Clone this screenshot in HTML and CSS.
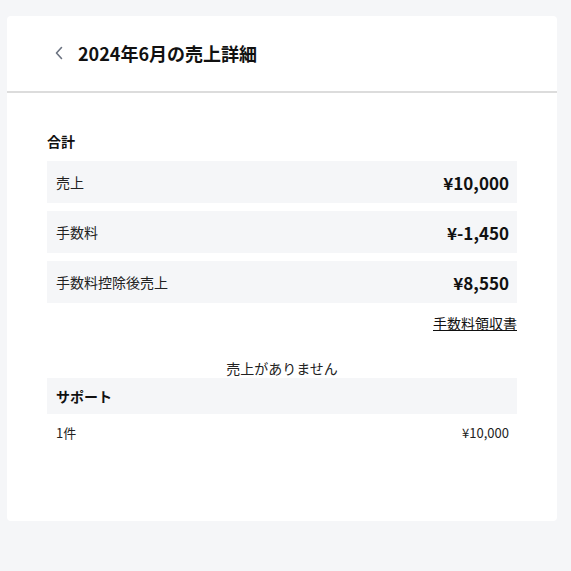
FILE: index.html
```html
<!DOCTYPE html>
<html lang="ja">
<head>
<meta charset="utf-8">
<link rel="stylesheet" href="styles.css">
</head>
<body>
<div class="card">
  <header class="head">
    <svg class="back" width="10" height="14" viewBox="0 0 10 14"><path d="M7.5 1.5 L2.5 7 L7.5 12.5" fill="none" stroke="#6b7280" stroke-width="1.6" stroke-linecap="round" stroke-linejoin="round"/></svg>
    <h1 class="title">2024年6月の売上詳細</h1>
  </header>
  <main class="content">
    <h2 class="section">合計</h2>
    <div class="rows">
      <div class="row"><span class="label">売上</span><span class="value">¥10,000</span></div>
      <div class="row"><span class="label">手数料</span><span class="value">¥-1,450</span></div>
      <div class="row"><span class="label">手数料控除後売上</span><span class="value">¥8,550</span></div>
    </div>
    <div class="linkline"><a class="link" href="#">手数料領収書</a></div>
    <p class="empty">売上がありません</p>
    <div class="subhead">サポート</div>
    <div class="item"><span>1件</span><span>¥10,000</span></div>
  </main>
</div>
</body>
</html>
```
FILE: styles.css
```css
html, body {
  margin: 0;
  padding: 0;
  background: #f5f6f8;
}
body {
  padding: 16px 14px 0 7px;
  font-family: "Noto Sans CJK JP", "Noto Sans", sans-serif;
  color: #111;
}
.card {
  width: 550px;
  height: 505px;
  background: #fff;
  border-radius: 4px;
  box-sizing: border-box;
}
.head {
  height: 75px;
  border-bottom: 2px solid #dcdcdc;
  display: flex;
  align-items: center;
  padding-left: 47px;
  gap: 14px;
}
.back { display: block; margin-top: -2px; }
.title {
  margin: 0;
  font-size: 18px;
  font-weight: 700;
  line-height: 24px;
  margin-top: -1px;
}
.content {
  padding: 38px 40px 0 40px;
}
.section {
  margin: 0 0 10px 0;
  font-size: 14px;
  font-weight: 700;
  line-height: 20px;
}
.rows {
  display: flex;
  flex-direction: column;
  gap: 8px;
}
.row {
  height: 42px;
  background: #f5f6f8;
  display: flex;
  align-items: center;
  justify-content: space-between;
  padding: 0 8px 0 9px;
}
.label {
  font-size: 14px;
  color: #222;
}
.value {
  font-size: 17px;
  font-weight: 700;
}
.linkline {
  display: flex;
  justify-content: flex-end;
  margin-top: 10px;
}
.link {
  font-size: 14px;
  color: #111;
  text-decoration: underline;
  line-height: 20px;
}
.empty {
  margin: 25px 0 0 0;
  text-align: center;
  font-size: 14px;
  line-height: 20px;
  color: #222;
}
.subhead {
  height: 36px;
  background: #f5f6f8;
  display: flex;
  align-items: center;
  padding-left: 9px;
  font-size: 14px;
  font-weight: 700;
}
.item {
  display: flex;
  justify-content: space-between;
  padding: 9px 8px 0 9px;
  font-size: 13px;
  line-height: 20px;
  color: #222;
}
```
